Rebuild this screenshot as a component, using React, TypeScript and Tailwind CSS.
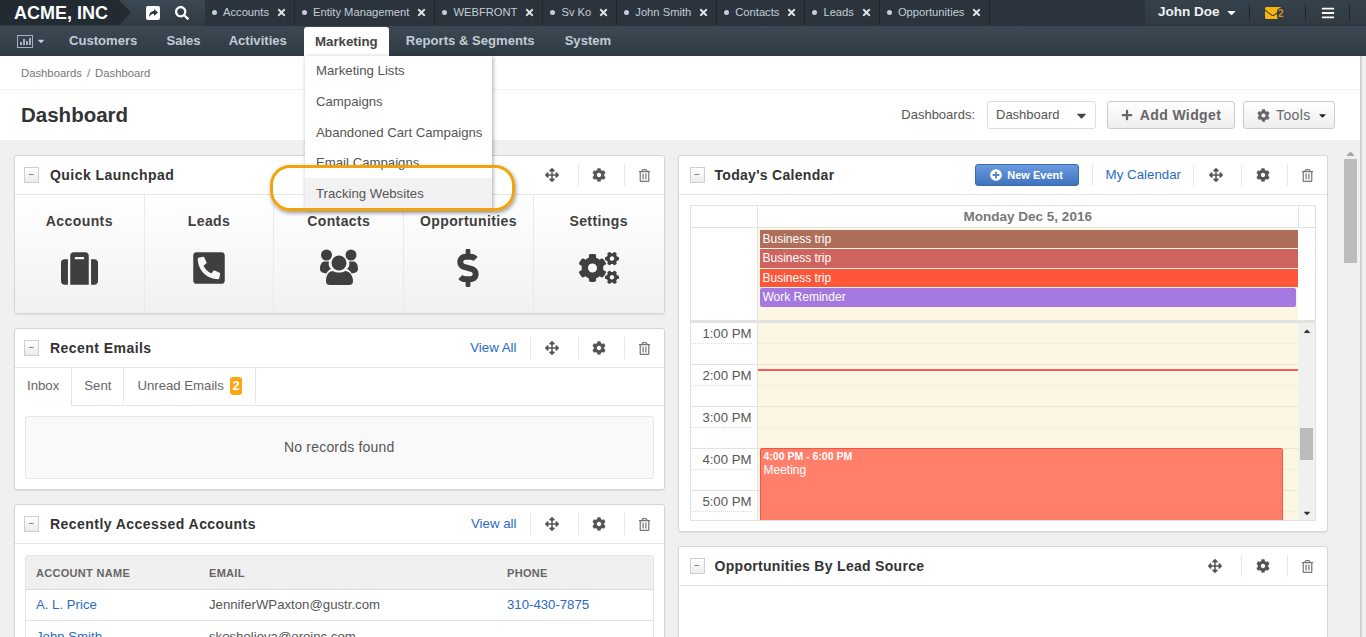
import { ReactNode } from 'react';
import {
  FaArrowsAlt,
  FaBars,
  FaCaretDown,
  FaCaretUp,
  FaCog,
  FaCogs,
  FaDollarSign,
  FaEnvelope,
  FaPhoneSquareAlt,
  FaPlus,
  FaPlusCircle,
  FaRegTrashAlt,
  FaSearch,
  FaSuitcase,
  FaTimes,
} from 'react-icons/fa';

const openTabs = ['Accounts', 'Entity Management', 'WEBFRONT', 'Sv Ko', 'John Smith', 'Contacts', 'Leads', 'Opportunities'];
const menuItems = ['Marketing Lists', 'Campaigns', 'Abandoned Cart Campaigns', 'Email Campaigns', 'Tracking Websites'];

function UsersIcon() {
  return (
    <svg width="42" height="40" viewBox="8 8 42 40" fill="currentColor">
      <circle cx="16.5" cy="15" r="5.5" />
      <circle cx="41" cy="15" r="5.5" />
      <path d="M10 29c0-5 2-7.500 5-7.500h4c-1 3 0 6 2 7.500-2 1-4 2.500-4.500 4.500C13 33 10 32 10 29z" />
      <path d="M48 29c0-5-2-7.500-5-7.500h-4c1 3 0 6-2 7.500 2 1 4 2.500 4.500 4.500C45 33 48 32 48 29z" />
      <circle cx="29" cy="23" r="7.500" />
      <path d="M16 41c0-6 3-10 7-10 3 2 9 2 12 0 4 0 8 4 8 10 0 3-1.500 4-4 4H20c-2.500 0-4-1-4-4z" />
    </svg>
  );
}

const launchpad = [
  { label: 'Accounts', icon: <FaSuitcase size={37} /> },
  { label: 'Leads', icon: <FaPhoneSquareAlt size={36} /> },
  { label: 'Contacts', icon: <UsersIcon /> },
  { label: 'Opportunities', icon: <FaDollarSign size={38} /> },
  { label: 'Settings', icon: <FaCogs size={40} /> },
];
const allDayEvents = [
  { title: 'Business trip', color: 'bg-[#ae6e5a]' },
  { title: 'Business trip', color: 'bg-[#cf645e]' },
  { title: 'Business trip', color: 'bg-[#ff5539]' },
  { title: 'Work Reminder', color: 'bg-[#a378e0] mr-[2px] rounded-[2px]' },
];
const hours = ['1:00 PM', '2:00 PM', '3:00 PM', '4:00 PM', '5:00 PM'];

function IconSlot({ children, className }: { children: ReactNode; className: string }) {
  return <div className={`flex h-[22px] items-center justify-center border-[#e8e8e8] text-[#555] ${className}`}>{children}</div>;
}

function Card({
  title,
  link,
  extra,
  wide,
  className,
  children,
}: {
  title: string;
  link?: string;
  extra?: ReactNode;
  wide?: boolean;
  className?: string;
  children?: ReactNode;
}) {
  return (
    <section className={`rounded-[3px] border border-[#d6d6d6] bg-white shadow-[0_1px_1px_rgba(0,0,0,0.08)] ${className ?? ''}`}>
      <header className={`flex h-[39px] items-center border-b border-[#e4e4e4] ${wide ? 'pl-[11px]' : 'pl-[9px]'}`}>
        <button className="flex h-[16px] w-[15px] items-center justify-center border border-[#cfcfcf] bg-gradient-to-b from-white to-[#ececec] text-[10px] leading-none text-[#666]">
          −
        </button>
        <h3 className={`text-[14px] font-bold text-[#333] ${wide ? 'ml-[10px] tracking-[0.3px]' : 'ml-[11px] tracking-[0.45px]'}`}>{title}</h3>
        <div className="ml-auto flex items-center">
          {extra}
          {link && <a className="pr-[13px] text-[13.3px] text-[#2a6ac4]">{link}</a>}
          <IconSlot className={`w-[48px] pr-[4px] ${link || extra ? 'border-l' : ''}`}><FaArrowsAlt size={14} /></IconSlot>
          <IconSlot className="w-[46px] border-l pr-[4px]"><FaCog size={14} /></IconSlot>
          <IconSlot className="w-[40px] border-l text-[#777]"><FaRegTrashAlt size={13} /></IconSlot>
        </div>
      </header>
      {children}
    </section>
  );
}

function TopBar() {
  return (
    <div className="flex h-[26px] bg-[#2b343c] text-[#c3ced8]">
      <div className="relative flex w-[205px] shrink-0 items-center bg-gradient-to-b from-[#3d4952] to-[#2f3a43]">
        <div className="absolute left-0 top-0 h-[25px] w-[131px] bg-[#222b32] [clip-path:polygon(0_0,119px_0,131px_50%,119px_100%,0_100%)]" />
        <span className="relative ml-[14px] text-[18px] font-bold leading-none text-white">ACME, INC</span>
        <svg width="14" height="14" viewBox="0 0 14 14" className="absolute left-[146px] top-[6px]">
          <rect width="14" height="14" rx="2" fill="#fff" />
          <path d="M3 11c0-4 2.500-6 5-6V3l4 3.500L8 10V7.800C6 7.800 4.300 8.800 3 11z" fill="#2b343c" />
        </svg>
        <FaSearch size={14} className="absolute left-[175px] top-[6px] text-white" />
      </div>
      {openTabs.map((tab) => (
        <div key={tab} className="flex h-[25px] items-center border-r border-[#1f272d] pl-[7px] pr-[7px] text-[11.2px]">
          <span className="h-[5px] w-[5px] rounded-full bg-[#c3ced8]" />
          <span className="ml-[6px]">{tab}</span>
          <FaTimes size={11} className="ml-[7px] text-[#dfe4e8]" />
        </div>
      ))}
      <div className="ml-auto flex h-[25px] w-[221px] items-center bg-gradient-to-b from-[#36424b] to-[#2f3a43]">
        <div className="flex w-[104px] items-center">
          <span className="ml-[13px] text-[13.5px] font-bold text-[#eef1f4]">John Doe</span>
          <FaCaretDown size={13} className="ml-[5px] text-white" />
        </div>
        <div className="h-[16px] w-px bg-[#1f272d]" />
        <div className="relative ml-[15px] w-[40px]">
          <FaEnvelope size={16} className="text-[#f5b40f]" />
          <span className="absolute left-[12px] top-[3px] rounded-full bg-[#323d46] px-[1px] text-[10px] font-bold leading-[12px] text-[#d08f20]">2</span>
        </div>
        <div className="h-[16px] w-px bg-[#1f272d]" />
        <FaBars size={14} className="ml-[15px] text-white" />
        <div className="ml-[14px] h-[16px] w-px bg-[#1f272d]" />
      </div>
    </div>
  );
}

function NavBar() {
  const linkClass = 'text-[13.1px] font-bold text-[#c0ccd6]';
  return (
    <nav className="flex h-[30px] items-center bg-gradient-to-b from-[#3c4953] to-[#2f3a44]">
      <svg width="16" height="13" viewBox="0 0 16 13" className="ml-[17px] text-[#9fb0c4]">
        <rect x="0.5" y="0.5" width="15" height="12" fill="none" stroke="currentColor" />
        <path d="M3 10V7h2v3zM6 10V4h2v6zM9 10V6h2v4zM12 10V3h2v7z" fill="currentColor" />
      </svg>
      <FaCaretDown size={10} className="ml-[3px] text-[#c0ccd6]" />
      <a className={`ml-[23px] ${linkClass}`}>Customers</a>
      <a className={`ml-[29px] ${linkClass}`}>Sales</a>
      <a className={`ml-[28px] ${linkClass}`}>Activities</a>
      <a className="ml-[17px] mt-[1px] flex h-[29px] w-[85px] items-center justify-center rounded-t-[3px] bg-white text-[13.3px] font-bold text-[#444]">Marketing</a>
      <a className={`ml-[17px] ${linkClass}`}>Reports &amp; Segments</a>
      <a className={`ml-[30px] ${linkClass}`}>System</a>
    </nav>
  );
}

function MarketingMenu() {
  return (
    <>
      <ul className="absolute left-[305px] top-[56px] w-[187px] bg-white shadow-[1px_1px_4px_rgba(0,0,0,0.35)]">
        {menuItems.map((item) => (
          <li
            key={item}
            className={`flex h-[30.6px] items-center pl-[11px] text-[13.2px] text-[#555] ${item === 'Tracking Websites' ? 'bg-[#f2f2f2]' : ''}`}
          >
            {item}
          </li>
        ))}
      </ul>
      <div className="absolute left-[270px] top-[165px] h-[46px] w-[245px] rounded-[20px] border-[3px] border-[#f0a30a] shadow-[1px_2px_4px_rgba(0,0,0,0.4)]" />
    </>
  );
}

function Calendar() {
  return (
    <div className="mx-[11px] mt-[10px] border border-[#e2e2e2]">
      <div className="flex h-[22px] border-b border-[#e2e2e2]">
        <div className="w-[67px] border-r border-[#e2e2e2]" />
        <div className="flex-1 text-center text-[13.5px] font-bold leading-[21px] text-[#777]">Monday Dec 5, 2016</div>
        <div className="w-[17px] border-l border-[#e2e2e2]" />
      </div>
      <div className="flex h-[95px] border-b-[3px] border-[#e2e2e2]">
        <div className="w-[67px] border-r border-[#e2e2e2]" />
        <div className="mr-[17px] flex-1 space-y-[1px] bg-[#fdf6e3] pl-[2px] pt-[2px]">
          {allDayEvents.map((event, i) => (
            <div key={i} className={`h-[18.4px] pl-[3px] text-[12px] leading-[18px] text-white ${event.color}`}>
              {event.title}
            </div>
          ))}
        </div>
      </div>
      <div className="relative flex h-[197px] overflow-hidden">
        <div className="w-[67px] shrink-0 border-r border-[#e2e2e2]">
          {hours.map((h) => (
            <div key={h} className="h-[42px] border-b border-[#e2e2e2] pr-[5px] text-right text-[13.2px] leading-[22px] text-[#555]">
              <div className="h-[21px] border-b border-dotted border-[#ddd]">{h}</div>
            </div>
          ))}
        </div>
        <div className="relative flex-1 bg-[#fdf6e3]">
          {hours.map((h) => (
            <div key={h} className="h-[42px] border-b border-[#e8e3d3]">
              <div className="h-[21px] border-b border-dotted border-[#ebe6d6]" />
            </div>
          ))}
          <div className="absolute inset-x-0 top-[46px] h-[2px] bg-[#f95d58]" />
          <div className="absolute left-[2px] right-[15px] top-[125px] h-[90px] rounded-[2px] border border-[#f4553f] bg-[#ff7f6b] pl-[3px] text-white">
            <div className="text-[10.500px] font-bold leading-[14px]">4:00 PM - 6:00 PM</div>
            <div className="text-[12px] leading-[15px]">Meeting</div>
          </div>
        </div>
        <div className="flex w-[17px] shrink-0 flex-col items-center bg-[#f0f0f0] text-[#333]">
          <FaCaretUp size={10} className="mt-[3px]" />
          <div className="mt-[92px] h-[32px] w-[13px] bg-[#bcbcbc]" />
          <FaCaretDown size={10} className="mb-[2px] mt-auto" />
        </div>
      </div>
    </div>
  );
}

export default function App() {
  return (
    <div className="relative flex h-[637px] flex-col overflow-hidden bg-[#f0f0f0] [font-family:'Liberation_Sans',Arial,sans-serif]">
      <TopBar />
      <NavBar />
      <div className="flex min-h-0 flex-1">
        <div className="flex min-w-0 flex-1 flex-col">
          <div className="flex h-[34px] shrink-0 items-center gap-[5px] border-b border-[#f0f0f0] bg-white pl-[21px] pt-[1px] text-[11.3px] text-[#777]">
            <span>Dashboards</span>
            <span>/</span>
            <span>Dashboard</span>
          </div>
          <div className="flex h-[50px] shrink-0 items-center bg-white pl-[21px] pr-[25px]">
            <h1 className="text-[20.500px] font-bold text-[#333]">Dashboard</h1>
            <span className="ml-auto text-[13px] text-[#555]">Dashboards:</span>
            <div className="ml-[12px] flex h-[28px] w-[109px] items-center justify-between rounded-[3px] border border-[#ddd] pl-[8px] pr-[6px] text-[13px] text-[#555]">
              Dashboard
              <FaCaretDown size={15} className="text-[#444]" />
            </div>
            <button className="ml-[11px] flex h-[28px] w-[128px] items-center justify-center gap-[7px] rounded-[3px] border border-[#ccc] bg-gradient-to-b from-white to-[#eee] text-[14px] font-bold tracking-[0.4px] text-[#666]">
              <FaPlus size={12} />
              Add Widget
            </button>
            <button className="ml-[8px] flex h-[28px] w-[92px] items-center gap-[6px] rounded-[3px] border border-[#ccc] bg-gradient-to-b from-white to-[#eee] pl-[13px] text-[14px] tracking-[0.4px] text-[#666]">
              <FaCog size={13} />
              Tools
              <FaCaretDown size={11} className="text-[#222]" />
            </button>
          </div>

          <div className="flex min-h-0 flex-1">
            <main className="grid flex-1 grid-cols-2 items-start gap-x-[13px] pl-[14px] pr-[9px] pt-[15px]">
              <div className="flex flex-col gap-[14px]">
                <Card title="Quick Launchpad">
                  <div className="grid h-[118px] grid-cols-5 bg-gradient-to-b from-white to-[#f1f1f1]">
                    {launchpad.map((item) => (
                      <div key={item.label} className="flex flex-col items-center border-r border-[#eaeaea] pt-[17px] text-[#3f3f3f] last:border-r-0">
                        <span className="text-[14px] font-bold leading-[18px] tracking-[0.4px]">{item.label}</span>
                        <div className="flex h-[60px] items-center pt-[16px]">{item.icon}</div>
                      </div>
                    ))}
                  </div>
                </Card>

                <Card title="Recent Emails" link="View All">
                  <div className="flex h-[38px] border-b border-[#e4e4e4] pb-[2px] text-[13.2px] text-[#666]">
                    <div className="-mb-[3px] flex items-center border-r border-[#e4e4e4] bg-white pb-[2px] pl-[12px] pr-[12px]">Inbox</div>
                    <div className="flex items-center border-r border-[#e4e4e4] px-[12px]">Sent</div>
                    <div className="flex items-center border-r border-[#e4e4e4] pl-[13px] pr-[13px]">
                      Unread Emails
                      <span className="ml-[6px] rounded-[3px] bg-[#ffa50f] px-[2.5px] text-[13px] font-bold leading-[18px] text-white">2</span>
                    </div>
                  </div>
                  <div className="m-[10px] flex h-[63px] items-center justify-center rounded-[3px] border border-[#e6e6e6] bg-[#f9f9f9] text-[14px] tracking-[0.2px] text-[#555]">
                    No records found
                  </div>
                </Card>

                <Card title="Recently Accessed Accounts" link="View all">
                  <div className="mx-[10px] mt-[11px] rounded-[3px] border border-[#e4e4e4]">
                    <div className="flex h-[34px] items-center border-b border-[#ddd] bg-[#f0f0f0] pt-[1px] text-[11px] font-bold tracking-[0.3px] text-[#666]">
                      <span className="w-[183px] pl-[10px]">ACCOUNT NAME</span>
                      <span className="w-[298px]">EMAIL</span>
                      <span>PHONE</span>
                    </div>
                    <div className="flex h-[31px] items-center border-b border-[#e4e4e4] text-[13.2px]">
                      <a className="w-[183px] pl-[10px] text-[#2a6ac4]">A. L. Price</a>
                      <span className="w-[298px] text-[#555]">JenniferWPaxton@gustr.com</span>
                      <a className="text-[#2a6ac4]">310-430-7875</a>
                    </div>
                    <div className="flex h-[31px] items-center text-[13.2px]">
                      <a className="w-[183px] pl-[10px] text-[#2a6ac4]">John Smith</a>
                      <span className="w-[298px] text-[#555]">skosholieva@oroinc.com</span>
                    </div>
                  </div>
                </Card>
              </div>

              <div className="flex flex-col gap-[14px]">
                <Card
                  title="Today's Calendar"
                  wide
                  className="h-[377px]"
                  extra={
                    <>
                      <button className="mr-[13px] flex h-[22px] w-[104px] items-center justify-center gap-[5px] rounded-[3px] border border-[#3a69a8] bg-gradient-to-b from-[#6a9ae0] to-[#3f74bd] text-[11px] font-bold text-white">
                        <FaPlusCircle size={12} />
                        New Event
                      </button>
                      <a className="border-l border-[#e8e8e8] pl-[13px] pr-[12px] text-[13.3px] leading-[22px] text-[#2a6ac4]">My Calendar</a>
                    </>
                  }
                >
                  <Calendar />
                </Card>
                <Card title="Opportunities By Lead Source" wide className="h-[200px]" />
              </div>
            </main>

            <aside className="flex w-[23px] shrink-0 flex-col pl-[7px] pt-[7px] text-[#a8a8a8]">
              <FaCaretUp size={13} />
              <div className="mt-[-1px] h-[104px] w-[13px] bg-[#bcbcbc]" />
            </aside>
          </div>
        </div>
        <div className="w-[6px] shrink-0 border-l-2 border-[#d0d0d0] bg-[#f0f0f0]" />
      </div>

      <MarketingMenu />
    </div>
  );
}
